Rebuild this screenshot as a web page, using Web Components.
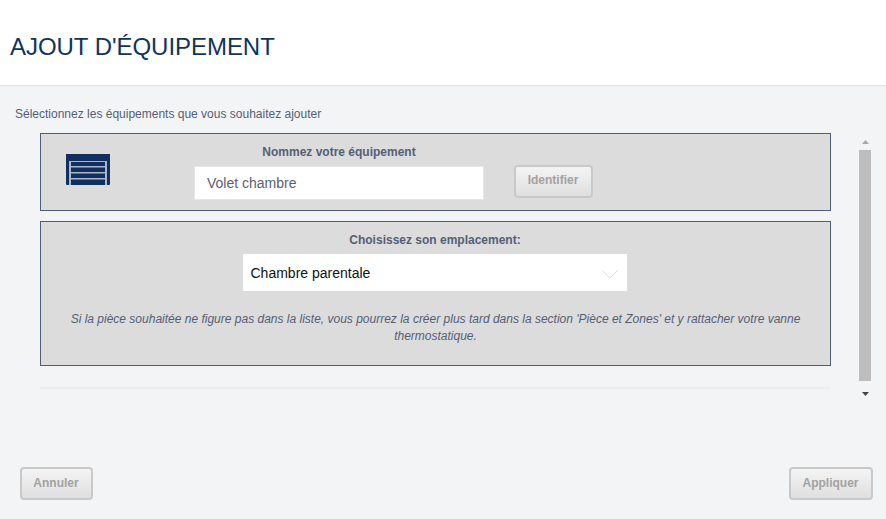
<!DOCTYPE html>
<html lang="fr"><head><meta charset="utf-8"><title>Ajout d'équipement</title>
<style>
html,body{margin:0;padding:0;width:886px;height:519px;overflow:hidden;background:#f3f4f6;font-family:"Liberation Sans",Arial,sans-serif}
</style></head><body>
<equip-app></equip-app>
<template id="btn-t"><style>
:host{display:inline-flex;box-sizing:border-box;align-items:center;justify-content:center;height:33px;border:2px solid #c9c9c9;border-radius:4px;background:linear-gradient(#f4f4f4,#dfdfdf);color:#a2a2a2;font:bold 12px "Liberation Sans",Arial,sans-serif;padding:0 1px 3px 0}
:host(.low){padding-bottom:1px}
</style><slot></slot></template>
<template id="panel-t"><style>
:host{display:block;box-sizing:border-box;background:#dcdcdc;border:1px solid #4d5d7c}
</style><slot></slot></template>
<template id="scroll-t"><style>
:host{display:flex;flex-direction:column;align-items:center;width:12px}
.a{height:17px;width:12px;display:flex;justify-content:center}
.up{padding-top:7px;box-sizing:border-box}
.down{padding-top:11px;box-sizing:border-box}
.t{flex:1;width:12px;background:#bdbdbd}
svg{display:block}
</style>
<div class="a up"><svg width="7" height="4" viewBox="0 0 7 4"><path d="M3.5 0L7 4H0z" fill="#a8a8a8"/></svg></div>
<div class="t"></div>
<div class="a down"><svg width="7" height="4" viewBox="0 0 7 4"><path d="M0 0h7L3.5 4z" fill="#444"/></svg></div>
</template>
<template id="app-t"><style>
:host{display:flex;flex-direction:column;width:886px;height:519px;color:#4d5a73}
header{box-sizing:border-box;height:86px;background:#fff;border-bottom:1px solid #e2e2e2;padding:33px 0 0 10px;font-size:24px;line-height:28px;color:#0f3460;letter-spacing:-.04px}
.main{flex:1;display:flex;flex-direction:column;padding:21px 13px 19px 20px;min-height:0}
.intro{font-size:12px;line-height:14px;margin-left:-5px;color:#545f75}
.mid{display:flex;margin-top:12px;height:265px}
.content{width:791px;margin-left:20px;display:flex;flex-direction:column}
.p1{height:78px;display:flex;padding:0}
.ico{margin:20px 0 0 25px}
.name{margin-left:84px;width:290px;padding-top:11px;display:flex;flex-direction:column;align-items:center}
.lbl{font-size:12px;font-weight:bold;line-height:14px;color:#545f75}
.p2 .lbl{margin-left:-1px}
.inp{box-sizing:border-box;width:290px;height:34px;margin-top:7px;background:#fff;border:1px solid #e6e6e6;padding:0 12px;display:flex;align-items:center;font-size:14px;color:#5c6070}
ui-btn.id{width:79px;margin:31px 0 0 30px}
.p2{height:145px;margin-top:10px;padding-top:11px;display:flex;flex-direction:column;align-items:center}
.sel{box-sizing:border-box;width:384px;height:37px;margin:7px 2px 0 0;background:#fff;display:flex;align-items:center;justify-content:space-between;padding:0 9px 0 8px;font-size:14px;color:#111}
.sel svg{margin-top:3px}
.note{width:750px;margin-top:20px;font-size:12px;font-style:italic;line-height:16.5px;text-align:center;color:#545f75}
.rule{height:2px;background:#ededee;margin-top:21px}
ui-scroll{margin-left:28px;height:265px}
.foot{margin-top:auto;display:flex;justify-content:space-between}
.foot ui-btn:first-child{width:73px}.foot ui-btn:last-child{width:84px}
</style>
<header>AJOUT D'ÉQUIPEMENT</header>
<div class="main">
<div class="intro">Sélectionnez les équipements que vous souhaitez ajouter</div>
<div class="mid">
<div class="content">
<ui-panel class="p1">
<svg class="ico" width="44" height="31" viewBox="0 0 44 31"><path fill="#a9b7c9" d="M3 7h38v24H3z"/><path fill="#12305f" d="M0 0h44v7H0zM0 7h3v23.500q0 .5-1 .5H1q-1 0-1-1zM41 7h3v23q0 1-1 1h-1q-1 0-1-.5zM5 8h34v4H5zM5 13.500h34v4.500H5zM5 19.500h34v4.500H5zM5 25.500h34v5.500H5z"/></svg>
<div class="name"><div class="lbl">Nommez votre équipement</div><div class="inp">Volet chambre</div></div>
<ui-btn class="id">Identifier</ui-btn>
</ui-panel>
<ui-panel class="p2">
<div class="lbl">Choisissez son emplacement:</div>
<div class="sel"><span>Chambre parentale</span><svg width="16" height="9" viewBox="0 0 16 9"><path d="M.5.5L8 8 15.500.5" fill="none" stroke="#dcdcdc"/></svg></div>
<div class="note">Si la pièce souhaitée ne figure pas dans la liste, vous pourrez la créer plus tard dans la section 'Pièce et Zones' et y rattacher votre vanne thermostatique.</div>
</ui-panel>
<div class="rule"></div>
</div>
<ui-scroll></ui-scroll>
</div>
<div class="foot"><ui-btn class="low">Annuler</ui-btn><ui-btn class="low">Appliquer</ui-btn></div>
</div></template>
<script>
function def(n,t){customElements.define(n,class extends HTMLElement{constructor(){super();this.attachShadow({mode:'open'}).appendChild(document.getElementById(t).content.cloneNode(true))}})}
def('ui-btn','btn-t');def('ui-panel','panel-t');def('ui-scroll','scroll-t');def('equip-app','app-t');
</script>
</body></html>
